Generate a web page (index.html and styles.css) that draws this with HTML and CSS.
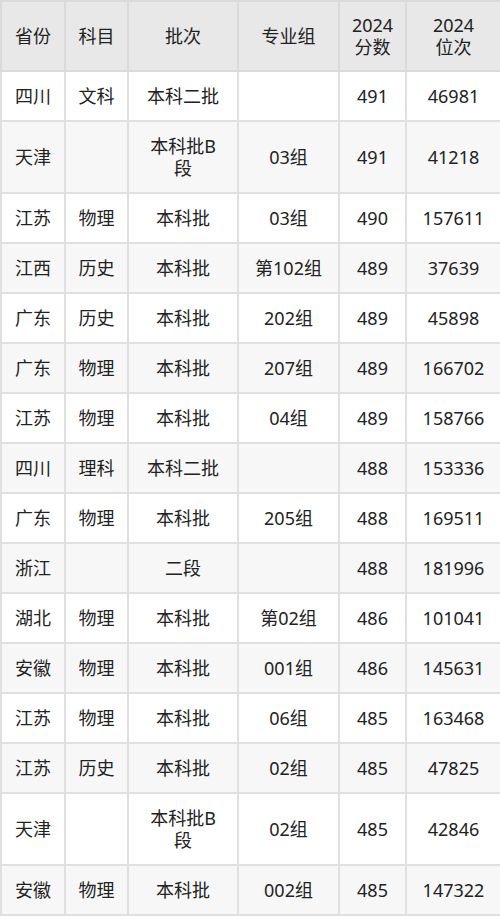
FILE: index.html
```html
<!DOCTYPE html>
<html lang="zh">
<head>
<meta charset="utf-8">
<link rel="stylesheet" href="styles.css">
</head>
<body>
<table class="score-table">
  <colgroup>
    <col class="c1"><col class="c2"><col class="c3"><col class="c4"><col class="c5"><col class="c6">
  </colgroup>
  <thead>
    <tr><th>省份</th><th>科目</th><th>批次</th><th>专业组</th><th>2024<br>分数</th><th>2024<br>位次</th></tr>
  </thead>
  <tbody>
    <tr><td>四川</td><td>文科</td><td>本科二批</td><td></td><td>491</td><td>46981</td></tr>
    <tr><td>天津</td><td></td><td>本科批B<br>段</td><td>03组</td><td>491</td><td>41218</td></tr>
    <tr><td>江苏</td><td>物理</td><td>本科批</td><td>03组</td><td>490</td><td>157611</td></tr>
    <tr><td>江西</td><td>历史</td><td>本科批</td><td>第102组</td><td>489</td><td>37639</td></tr>
    <tr><td>广东</td><td>历史</td><td>本科批</td><td>202组</td><td>489</td><td>45898</td></tr>
    <tr><td>广东</td><td>物理</td><td>本科批</td><td>207组</td><td>489</td><td>166702</td></tr>
    <tr><td>江苏</td><td>物理</td><td>本科批</td><td>04组</td><td>489</td><td>158766</td></tr>
    <tr><td>四川</td><td>理科</td><td>本科二批</td><td></td><td>488</td><td>153336</td></tr>
    <tr><td>广东</td><td>物理</td><td>本科批</td><td>205组</td><td>488</td><td>169511</td></tr>
    <tr><td>浙江</td><td></td><td>二段</td><td></td><td>488</td><td>181996</td></tr>
    <tr><td>湖北</td><td>物理</td><td>本科批</td><td>第02组</td><td>486</td><td>101041</td></tr>
    <tr><td>安徽</td><td>物理</td><td>本科批</td><td>001组</td><td>486</td><td>145631</td></tr>
    <tr><td>江苏</td><td>物理</td><td>本科批</td><td>06组</td><td>485</td><td>163468</td></tr>
    <tr><td>江苏</td><td>历史</td><td>本科批</td><td>02组</td><td>485</td><td>47825</td></tr>
    <tr><td>天津</td><td></td><td>本科批B<br>段</td><td>02组</td><td>485</td><td>42846</td></tr>
    <tr><td>安徽</td><td>物理</td><td>本科批</td><td>002组</td><td>485</td><td>147322</td></tr>
  </tbody>
</table>
</body>
</html>
```

FILE: styles.css
```css
html, body {
  margin: 0;
  padding: 0;
  background: #ffffff;
}
body {
  font-family: "Noto Sans", "Noto Sans CJK SC", sans-serif;
  font-size: 18px;
  color: #222222;
}
.score-table {
  width: 500px;
  table-layout: fixed;
  border-collapse: collapse;
}
.c1 { width: 64px; }
.c2 { width: 63px; }
.c3 { width: 110px; }
.c4 { width: 101px; }
.c5 { width: 67px; }
.c6 { width: 95px; }
.score-table th,
.score-table td {
  border: 2px solid #e0e0e0;
  padding: 13px 2px 13px;
  line-height: 22px;
  text-align: center;
  vertical-align: middle;
  font-weight: normal;
  white-space: nowrap;
}
.score-table thead th {
  padding: 12px 2px 12px;
  background: #e8e8e8;
  border-color: #dadada;
}
.score-table tbody tr:nth-child(even) td {
  background: #f7f7f7;
}
```
